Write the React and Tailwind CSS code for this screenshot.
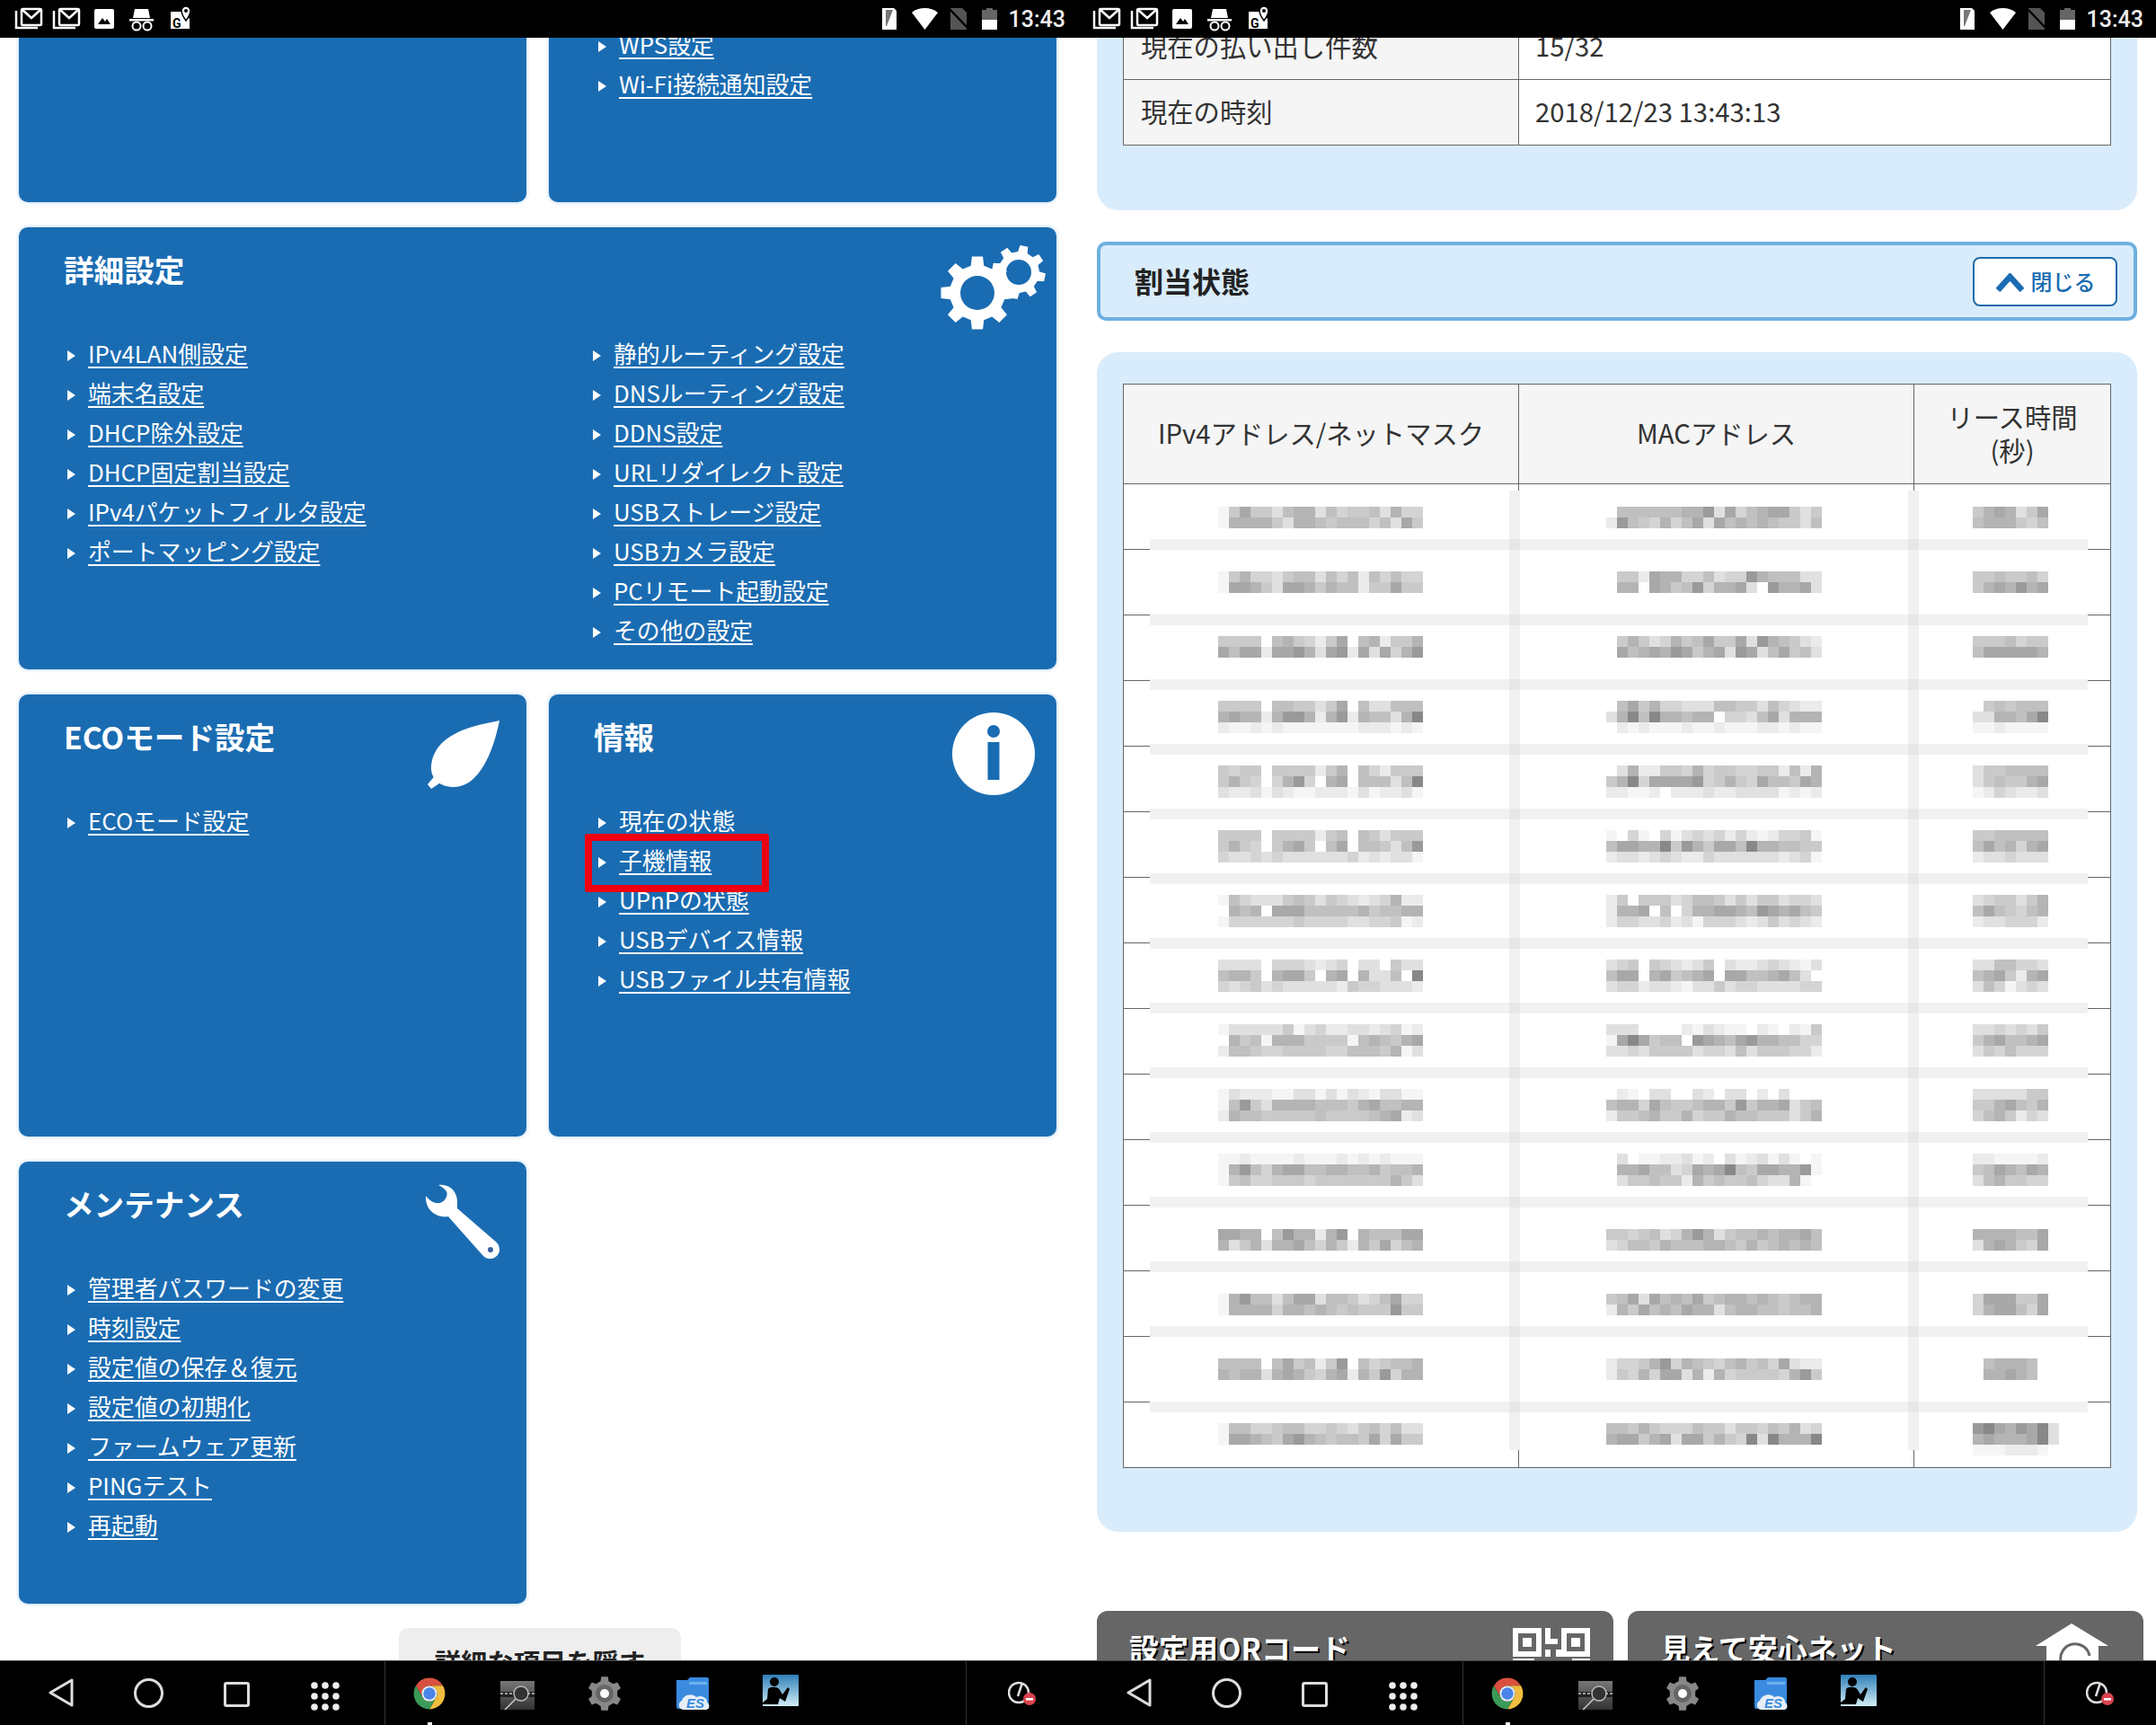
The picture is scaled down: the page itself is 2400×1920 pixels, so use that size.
const cardLists = {
  top: ['WPS設定', 'Wi-Fi接続通知設定'],
  detailLeft: ['IPv4LAN側設定', '端末名設定', 'DHCP除外設定', 'DHCP固定割当設定', 'IPv4パケットフィルタ設定', 'ポートマッピング設定'],
  detailRight: ['静的ルーティング設定', 'DNSルーティング設定', 'DDNS設定', 'URLリダイレクト設定', 'USBストレージ設定', 'USBカメラ設定', 'PCリモート起動設定', 'その他の設定'],
  eco: ['ECOモード設定'],
  info: ['現在の状態', '子機情報', 'UPnPの状態', 'USBデバイス情報', 'USBファイル共有情報'],
  maint: ['管理者パスワードの変更', '時刻設定', '設定値の保存＆復元', '設定値の初期化', 'ファームウェア更新', 'PINGテスト', '再起動'],
};

// blurred-out lease table: one char per 12px mosaic cell
const shades = { 1: '#f5f5f5', 2: '#ebebeb', 3: '#e0e0e0', 4: '#d4d4d4', 5: '#cacaca', 6: '#c0c0c0', 7: '#b4b4b4', 8: '#a8a8a8', 9: '#9a9a9a', a: '#888888' };
const mosaicRows = [
  { y: 564, a: ['1585536773645563744', '1777753776566646385'], b: ['.6666667793846788535', '29654746838676765536'], c: ['5787358', '6777546'] },
  { y: 636, a: ['1574435663646264644', '1887538875766255855'], b: ['.5528774463449766633', '.77.8756947783.97783'], c: ['5565564', '5787978'] },
  { y: 708, a: ['5555.6754258.672557', '8688288973892838479'], b: ['.5753475685583976532', '.8678798578398368563'], c: ['5556455', '6888887'] },
  { y: 780, a: ['5555.6655358.633666', '787727997279276637a', '2112121111111222121'], b: ['.6857443336655364322', '37a6a77677.443683777', '.2121112112111221211'], c: ['.565666', '337768a', '1121111'] },
  { y: 852, a: ['5455.5555257.642555', '5754.4794.78.66636a', '3223132112221312231'], b: ['.3722554745544552627', '57a48888945754866587', '22112.22232233331212'], c: ['3556666', '3565578', '1243223'] },
  { y: 924, a: ['5555.5555256.653555', '5754.5785.68.665369', '4334343333334232331'], b: ['1.41.413434242124451', '68877a5975886a776655', '23323432243333332341'], c: ['5566666', '6867478', '2334333'] },
  { y: 996, a: ['1643335653543234722', '.767.88866666756677', '1444444544443344512'], b: ['25.55534665353553443', '2778.6.4778876987865', '24433423144432353432'], c: ['3455357', '6865467', '2334442'] },
  { y: 1068, a: ['3333.4443234.33.533', '6775.7885.78.7336.a', '4345343333325443332'], b: ['345.543235.322343213', '688.785678.88667863', '34423321335344333344'], c: ['3366443', '6785278', '3641343'] },
  { y: 1140, a: ['1333335134223323412', '.756177755551676578', '2665445555446665713'], b: ['333....213211.21.215', '18a8566.987689776644', '33435555344363555442'], c: ['3343435', '5786678', '3546444'] },
  { y: 1212, a: ['1322211331313213311', '1695377776665786677', '2766555556555567823'], b: ['.21.33..32.33.2.3...', '67748655677595778356', '25567557455766555357'], c: ['3333355', '5578657', '4675243'] },
  { y: 1284, a: ['1121111211121212111', '1796478866776675667', '1564455545555555753'], b: ['.3.1122312.3123131.1', '.7786634878a65887791', '.355655275655643371.'], c: ['2211112', '5687687', '3675544'] },
  { y: 1368, a: ['8877.6977279.766688', '7357377864752758467'], b: ['55456347973566767786', '34665766677657567676'], c: ['7777668', '3787548'] },
  { y: 1440, a: ['1796636883665346844', '1777747767656555955'], b: ['56838676856776765677', '27586768773677665667'], c: ['4888558', '4788648'] },
  { y: 1512, a: ['6666.6856259.645667', '7677378754782759477'], b: ['24457947654675648322', '25474883727455554795'], c: ['.67776.', '.77876.'] },
  { y: 1584, a: ['1664456644543564633', '1887658976566584855'], b: ['66575444655355465734', '7885783885754a3a777a'], c: ['9a8798a3', '787778a3', '1112221'] },
];
const bandRows = [600, 684, 756, 828, 900, 972, 1044, 1116, 1188, 1260, 1332, 1404, 1476, 1560];

const gearPath = (cx, cy, R, r, n, rot = 0) => {
  const pts = [];
  const step = (Math.PI * 2) / n;
  for (let i = 0; i < n; i++) {
    const a = i * step + rot;
    [[-0.3, r], [-0.19, R], [0.19, R], [0.3, r]].forEach(([k, rad]) => {
      const t = a + k * step;
      pts.push(`${(cx + Math.sin(t) * rad).toFixed(2)} ${(cy - Math.cos(t) * rad).toFixed(2)}`);
    });
  }
  return `M${pts.join('L')}Z`;
};

const circleSub = (cx, cy, r) => `M${cx - r} ${cy}a${r} ${r} 0 1 0 ${r * 2} 0a${r} ${r} 0 1 0 ${-r * 2} 0Z`;

const Arrow = () => (
  <svg width="9" height="12" viewBox="0 0 9 12" className="shrink-0 mt-[5px]">
    <path d="M0 0L9 6L0 12Z" fill="#fff" />
  </svg>
);

const LinkList = ({ items, className = '' }) => (
  <ul className={`flex flex-col ${className}`}>
    {items.map((item) => (
      <li key={item} className="flex items-center h-[44px]">
        <Arrow />
        <a className="ml-[14px] text-[25.85px] leading-[44px] text-white underline decoration-2 underline-offset-[4px] whitespace-nowrap">{item}</a>
      </li>
    ))}
  </ul>
);

const Card = ({ title, icon, children, className = 'h-[492px]' }) => (
  <section className={`relative bg-[#1a6cb2] rounded-[10px] shadow-[0_0_4px_rgba(90,160,220,0.55)] ${className}`}>
    {title && <h2 className="pt-[22px] pl-[50px] h-[72px] text-[33.6px] leading-[50px] font-bold text-white">{title}</h2>}
    {icon}
    {children}
  </section>
);

const GearsIcon = () => (
  <svg width="118" height="95" viewBox="0 0 118 95" className="absolute top-[20px] right-[11px]">
    <path fillRule="evenodd" fill="#fff" d={gearPath(41, 53, 41, 31, 8) + circleSub(41, 53, 19)} />
    <path fillRule="evenodd" fill="#fff" d={gearPath(87, 30, 30, 23, 8, 0.2) + circleSub(87, 30, 14)} />
  </svg>
);

const LeafIcon = () => (
  <svg width="80" height="76" viewBox="0 0 80 76" className="absolute top-[29px] right-[30px]">
    <path fill="#fff" d="M80 0C50 6 8 14 4 50C3 62 10 73 28 74C55 75 72 40 80 0Z" />
    <path fill="#fff" d="M11 58L0 71L4 76L19 66Z" />
  </svg>
);

const InfoIcon = () => (
  <svg width="92" height="92" viewBox="0 0 92 92" className="absolute top-[20px] right-[24px]">
    <circle cx="46" cy="46" r="46" fill="#fff" />
    <circle cx="46" cy="21" r="7" fill="#1a6cb2" />
    <rect x="39.5" y="33" width="13" height="42" fill="#1a6cb2" />
  </svg>
);

const WrenchIcon = () => (
  <svg width="84" height="83" viewBox="0 0 84 83" className="absolute top-[25px] right-[29px]">
    <path fill="#fff" d="M15 1C28 -1 37 9 36 22L36 27L80 65A10.5 10.5 0 0 1 65 80L26 36C12 38 0 28 1 13C5 18 10 22 16 21C23 20 26 12 24 8C22 5 19 3 15 1Z" />
    <circle cx="73" cy="73" r="3" fill="#3d5f9f" />
  </svg>
);

const QrIcon = () => (
  <svg width="86" height="40" viewBox="0 0 86 40" className="absolute top-[19px] right-[26px]">
    <g fill="none" stroke="#fff" strokeWidth="6">
      <rect x="3" y="3" width="26" height="26" />
      <rect x="57" y="3" width="26" height="26" />
    </g>
    <rect x="11" y="11" width="10" height="10" fill="#fff" />
    <rect x="65" y="11" width="10" height="10" fill="#fff" />
    <path fill="#fff" d="M36 0H42V12H50V18H36ZM36 24H42V32H36ZM48 24H54V32H48ZM0 34H24V40H0ZM30 36H60V40H30ZM66 34H86V40H66Z" />
  </svg>
);

const HouseIcon = () => (
  <svg width="82" height="42" viewBox="0 0 82 42" className="absolute top-[14px] right-[38px]">
    <path fill="#fff" d="M40 0L81 25L70 25L70 42L12 42L12 25L0 25Z" />
    <path fill="none" stroke="#666" strokeWidth="3" d="M28 42A16 16 0 0 1 60 36" />
  </svg>
);

const StatusBar = () => (
  <div className="h-[42px] shrink-0 bg-black flex items-center justify-between">
    <svg width="220" height="42" viewBox="0 0 220 42">
      {[0, 42].map((dx) => (
        <g key={dx} transform={`translate(${dx} 0)`}>
          <path fill="none" stroke="#fff" strokeWidth="2.5" d="M18 12V31H42" />
          <rect x="24" y="10" width="22" height="18" rx="1.5" fill="none" stroke="#fff" strokeWidth="2.5" />
          <path fill="none" stroke="#fff" strokeWidth="2.5" d="M25 11L35 20L45 11" />
        </g>
      ))}
      <rect x="105" y="10" width="22" height="22" rx="2" fill="#fff" />
      <path d="M109 27L114 20L117 24L119 21L123 27Z" fill="#000" />
      <path d="M150 10L165 10L167 20L148 20Z" fill="#fff" />
      <rect x="144" y="21" width="27" height="2.5" fill="#fff" />
      <circle cx="152" cy="29" r="4.5" fill="none" stroke="#fff" strokeWidth="2" />
      <circle cx="164" cy="29" r="4.5" fill="none" stroke="#fff" strokeWidth="2" />
      <path d="M190 13H203L211 21V32H190Z" fill="#fff" />
      <path d="M207 7A5 5 0 0 1 212 12C212 16 207 23 207 23C207 23 202 16 202 12A5 5 0 0 1 207 7Z" fill="#fff" stroke="#000" strokeWidth="1.5" />
      <circle cx="207" cy="12" r="2" fill="#000" />
      <text x="192" y="31" fontSize="14" fontWeight="700" fontFamily="Roboto" fill="#000">G</text>
    </svg>
    <div className="flex items-center pr-[14px]">
      <svg width="135" height="42" viewBox="0 0 135 42">
        <path d="M2 9H15L18 12V33H2Z" fill="#fff" />
        <path d="M6 11H14L7 29H6Z" fill="#777" />
        <path d="M49.5 33L35 14C39 10.5 44 9 49.5 9C55 9 60 10.5 64 14Z" fill="#fff" />
        <path d="M78 9H91L96 14V33H78Z" fill="#555" />
        <path d="M76 9L99 33" stroke="#000" strokeWidth="2.5" />
        <path d="M118 11V9H125V11H130V33H113V11Z" fill="#666" />
        <rect x="113" y="22" width="17" height="11" fill="#fff" />
      </svg>
      <span className="ml-[8px] font-['Roboto',sans-serif] text-[25px] font-medium leading-none text-[#eeeeee]">13:43</span>
    </div>
  </div>
);

const ChromeIcon = () => (
  <svg width="38" height="38" viewBox="0 0 48 48" className="ml-[30px]">
    <path fill="#d9503f" d="M24 2A22 22 0 0 0 5 13L14.5 29.5A11 11 0 0 1 24 13L43 13A22 22 0 0 0 24 2Z" />
    <path fill="#f0bd3e" d="M43 13L24 13A11 11 0 0 1 33.5 29.5L24 46A22 22 0 0 0 43 13Z" />
    <path fill="#3b9a57" d="M5 13A22 22 0 0 0 24 46L33.5 29.5A11 11 0 0 1 14.5 29.5Z" />
    <circle cx="24" cy="24" r="11" fill="#eee" />
    <circle cx="24" cy="24" r="8.5" fill="#4a85ea" />
  </svg>
);

const ScopeIcon = () => (
  <svg width="38" height="32" viewBox="0 0 38 32" className="ml-[60px] mt-[5px]">
    <defs>
      <linearGradient id="scopeBg" x1="0" y1="0" x2="0" y2="1">
        <stop offset="0" stopColor="#777" />
        <stop offset="0.5" stopColor="#555" />
        <stop offset="1" stopColor="#333" />
      </linearGradient>
    </defs>
    <rect width="38" height="32" fill="url(#scopeBg)" />
    <rect y="12" width="38" height="6" fill="#222" />
    <path d="M0 14H38" stroke="#ccc" strokeWidth="1.5" strokeDasharray="3 2" />
    <circle cx="23" cy="14" r="8" fill="#333" stroke="#bbb" strokeWidth="1.5" />
    <path d="M17 20L5 32" stroke="#ccc" strokeWidth="1.5" />
  </svg>
);

const SettingsIcon = () => (
  <svg width="36" height="38" viewBox="0 0 36 38" className="ml-[60px]">
    <path fillRule="evenodd" fill="#888" d={gearPath(18, 19, 19, 14.5, 6)} />
    <circle cx="18" cy="19" r="10" fill="#666" />
    <circle cx="18" cy="19" r="5" fill="#fff" />
  </svg>
);

const EsIcon = () => (
  <svg width="40" height="38" viewBox="0 0 40 38" className="ml-[60px]">
    <path fill="#3a8be0" d="M2 4H14L17 1H36A2 2 0 0 1 38 3V34Q38 36 36 36H4Q2 36 2 34Z" />
    <path fill="#6db2f2" d="M16 6H36V9H16Z" />
    <path fill="#e6eef5" d="M10 37C4 37 3 29 8 27C10 20 20 18 24 23C31 20 37 25 36 29C40 31 39 37 35 37Z" />
    <text x="13" y="35" fontSize="15" fontWeight="700" fontStyle="italic" fontFamily="Liberation Sans" fill="#3a8be0">ES</text>
  </svg>
);

const KindleIcon = () => (
  <svg width="40" height="35" viewBox="0 0 40 35" className="ml-[58px] -mt-[2px]">
    <defs>
      <linearGradient id="kindleBg" x1="0" y1="0" x2="0" y2="1">
        <stop offset="0" stopColor="#2f7fb8" />
        <stop offset="1" stopColor="#d2eef6" />
      </linearGradient>
    </defs>
    <rect width="40" height="35" rx="1" fill="url(#kindleBg)" />
    <circle cx="13" cy="8" r="5" fill="#000" />
    <path fill="#000" d="M6 16C8 13 17 13 19 17L22 22L28 14L30 16L25 30L19 26L17 33H0V31L5 27Z" />
  </svg>
);

const NavBar = () => (
  <nav className="relative h-[72px] shrink-0 bg-black border-t border-[#444] flex">
    <div className="w-[429px] shrink-0 border-r border-[#333] flex items-start pt-[19px] pl-[54px]">
      <svg width="28" height="32" viewBox="0 0 28 32">
        <path d="M26 2V30L2 16Z" fill="none" stroke="#ddd" strokeWidth="3" strokeLinejoin="round" />
      </svg>
      <svg width="33" height="33" viewBox="0 0 33 33" className="ml-[67px]">
        <circle cx="16.5" cy="16.5" r="15" fill="none" stroke="#ddd" strokeWidth="3" />
      </svg>
      <svg width="29" height="28" viewBox="0 0 29 28" className="ml-[67px] mt-[4px]">
        <rect x="1.5" y="1.5" width="26" height="25" rx="1.5" fill="none" stroke="#ddd" strokeWidth="3" />
      </svg>
      <svg width="32" height="32" viewBox="0 0 32 32" className="ml-[68px] mt-[4px]">
        {[4, 16, 28].map((y) => [4, 16, 28].map((x) => <circle key={`${x}-${y}`} cx={x} cy={y} r="3.8" fill="#eee" />))}
      </svg>
    </div>
    <div className="w-[647px] shrink-0 border-r border-[#333] flex items-start pt-[17px]">
      <ChromeIcon />
      <ScopeIcon />
      <SettingsIcon />
      <EsIcon />
      <KindleIcon />
    </div>
    <div className="pl-[46px] pt-[21px]">
      <svg width="32" height="30" viewBox="0 0 32 30">
        <circle cx="12" cy="14" r="11" fill="none" stroke="#ddd" strokeWidth="2.5" />
        <path d="M16 3L11 18" stroke="#ddd" strokeWidth="2.5" />
        <circle cx="24" cy="21" r="7" fill="#d9434e" />
        <rect x="20" y="20" width="8" height="2.5" fill="#fff" />
      </svg>
    </div>
    <span className="absolute bottom-0 left-[476px] w-[5px] h-[3px] bg-white" />
  </nav>
);

const LeasePixels = () => {
  const cols = [['a', 1356], ['b', 1788], ['c', 2196]];
  return (
    <svg viewBox="1250 427 1100 1206" width="1100" height="1206" className="absolute left-0 top-0" shapeRendering="crispEdges">
      <rect x="1280" y="546" width="1044" height="1068" fill="#fff" />
      {bandRows.map((y) => <rect key={y} x="1280" y={y} width="1044" height="12" fill="#f1f1f1" />)}
      {[1680, 2124].map((x) => <rect key={x} x={x} y="546" width="12" height="1068" fill="#f1f1f1" />)}
      {[1680, 2124].map((x) => bandRows.map((y) => <rect key={`${x}-${y}`} x={x} y={y} width="12" height="12" fill="#e7e7e7" />))}
      {mosaicRows.map((row) => cols.map(([key, x0]) => row[key].map((line, li) => [...line].map((ch, ci) => (
        ch === '.' ? null : <rect key={`${row.y}-${key}-${li}-${ci}`} x={x0 + ci * 12} y={row.y + li * 12} width="12" height="12" fill={shades[ch]} />
      )))))}
    </svg>
  );
};

const LeaseTable = () => (
  <div className="relative">
    <table className="w-[1100px] table-fixed border-collapse text-[29.3px] text-[#333]">
      <colgroup>
        <col className="w-[440px]" />
        <col className="w-[440px]" />
        <col />
      </colgroup>
      <thead>
        <tr className="h-[111px] bg-[#f5f5f5]">
          <th className="border border-[#666] font-normal pb-[2px]">IPv4アドレス/ネットマスク</th>
          <th className="border border-[#666] font-normal pb-[2px]">MACアドレス</th>
          <th className="border border-[#666] font-normal leading-[37px] pb-[2px]">リース時間<br />(秒)</th>
        </tr>
      </thead>
      <tbody>
        {mosaicRows.map((row) => (
          <tr key={row.y} className="h-[73px] bg-white">
            <td className="border border-[#666]" />
            <td className="border border-[#666]" />
            <td className="border border-[#666]" />
          </tr>
        ))}
      </tbody>
    </table>
    <LeasePixels />
  </div>
);

const LeftPane = () => (
  <div className="w-[1200px] h-full flex flex-col">
    <StatusBar />
    <main className="flex-1 min-h-0 overflow-hidden">
      {/* page is scrolled, the top row runs under the status bar */}
      <div className="-mt-[134px] ml-[21px] w-[1155px] grid grid-cols-2 gap-x-[25px] gap-y-[28px]">
        <Card className="h-[317px]" />
        <Card className="h-[317px] pt-[119px] pl-[55px]">
          <LinkList items={cardLists.top} />
        </Card>
        <Card title="詳細設定" icon={<GearsIcon />} className="col-span-2 h-[492px]">
          <div className="pt-[46px] pl-[54px] grid grid-cols-[585px_1fr]">
            <LinkList items={cardLists.detailLeft} />
            <LinkList items={cardLists.detailRight} />
          </div>
        </Card>
        <Card title="ECOモード設定" icon={<LeafIcon />}>
          <LinkList items={cardLists.eco} className="pt-[46px] pl-[54px]" />
        </Card>
        <Card title="情報" icon={<InfoIcon />}>
          <LinkList items={cardLists.info} className="pt-[46px] pl-[55px]" />
          <div className="absolute left-[40px] top-[155px] w-[205px] h-[65px] border-[8px] border-[#ee0011] rounded-[3px]" />
        </Card>
        <Card title="メンテナンス" icon={<WrenchIcon />}>
          <LinkList items={cardLists.maint} className="pt-[46px] pl-[54px]" />
        </Card>
      </div>
      <div className="mt-[27px] ml-[444px] w-[314px] h-[80px] rounded-[10px] bg-[#eeeeee] pt-[17px] text-center text-[29.3px] font-bold leading-[40px] text-[#222]">
        詳細な項目を隠す
      </div>
    </main>
    <NavBar />
  </div>
);

const RightPane = () => (
  <div className="w-[1200px] h-full flex flex-col">
    <StatusBar />
    <main className="flex-1 min-h-0 overflow-hidden pl-[21px]">
      <div className="-mt-[60px] w-[1158px] bg-[#d9ecfb] rounded-b-[24px] pl-[29px] pt-[33px] pb-[72px]">
        <table className="w-[1100px] table-fixed border-collapse text-[29.3px] text-[#333]">
          <colgroup>
            <col className="w-[440px]" />
            <col />
          </colgroup>
          <tbody>
            <tr className="h-[73px]">
              <th className="border border-[#666] bg-[#f5f5f5] pl-[19px] pb-[2px] text-left font-normal">現在の払い出し件数</th>
              <td className="border border-[#666] bg-white pl-[18px] pb-[2px]">15/32</td>
            </tr>
            <tr className="h-[73px]">
              <th className="border border-[#666] bg-[#f5f5f5] pl-[19px] pb-[2px] text-left font-normal">現在の時刻</th>
              <td className="border border-[#666] bg-white pl-[18px] pb-[2px]">2018/12/23 13:43:13</td>
            </tr>
          </tbody>
        </table>
      </div>
      <div className="mt-[35px] w-[1158px] h-[88px] bg-[#d9ecfb] border-[4px] border-[#6db0e0] rounded-[10px] flex items-center justify-between pl-[38px] pr-[18px]">
        <h2 className="pb-[3px] text-[32px] font-bold text-[#222]">割当状態</h2>
        <button className="w-[161px] h-[55px] bg-white border-2 border-[#1f6ca8] rounded-[8px] flex items-center justify-center gap-[7px] text-[24px] font-medium text-[#1a6cb2]">
          <svg width="33" height="21" viewBox="0 0 33 21" className="mt-[3px]">
            <path d="M3 19L16.5 4L30 19" fill="none" stroke="#1a6cb2" strokeWidth="6.5" />
          </svg>
          閉じる
        </button>
      </div>
      <div className="mt-[35px] w-[1158px] bg-[#d9ecfb] rounded-[24px] pl-[29px] pt-[35px] pb-[71px]">
        <LeaseTable />
      </div>
      <div className="mt-[88px] w-[1165px] grid grid-cols-2 gap-x-[16px]">
        <div className="relative h-[120px] bg-[#666666] rounded-[12px] pl-[36px] pt-[16px] text-[33px] font-bold leading-[50px] text-white [text-shadow:2px_2px_0_#000]">
          設定用QRコード
          <QrIcon />
        </div>
        <div className="relative h-[120px] bg-[#666666] rounded-[12px] pl-[37px] pt-[16px] text-[33px] font-bold leading-[50px] text-white [text-shadow:2px_2px_0_#000]">
          見えて安心ネット
          <HouseIcon />
        </div>
      </div>
    </main>
    <NavBar />
  </div>
);

export default function App() {
  return (
    <div className="w-[2400px] h-[1920px] flex overflow-hidden bg-white font-['Noto_Sans_CJK_JP','Liberation_Sans',sans-serif]">
      <LeftPane />
      <RightPane />
    </div>
  );
}
